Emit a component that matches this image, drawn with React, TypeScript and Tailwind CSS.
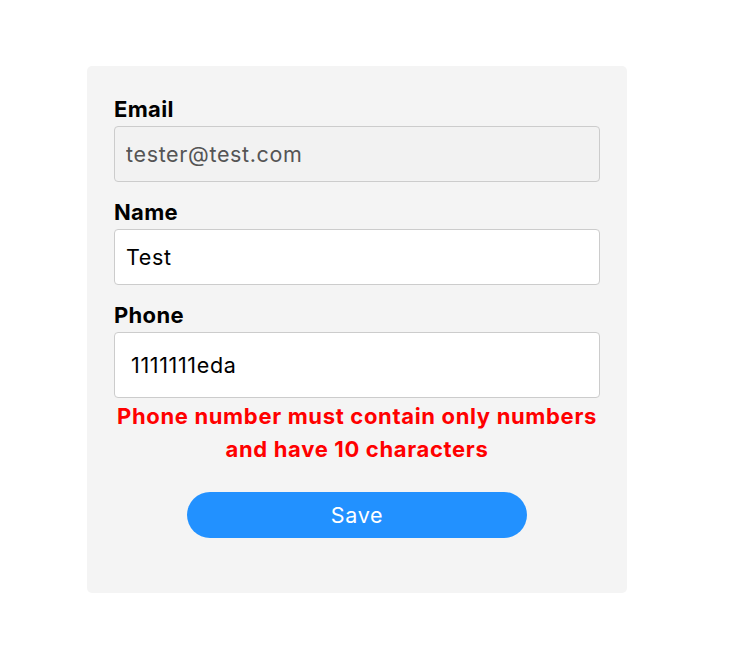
import React from "react";

export default function App() {
  const font = { fontFamily: "Inter, 'Noto Sans', sans-serif" };
  return (
    <div className="min-h-screen bg-white tracking-[0.02em]" style={font}>
      <div className="pt-[66px] pl-[87px]">
        <div className="w-[540px] bg-[#f4f4f4] rounded-[5px] px-[27px] pt-[29px] pb-[55px]">
          <label className="block text-[22px] leading-[28px] font-bold text-black mb-[3px]">Email</label>
          <input
            disabled
            value="tester@test.com"
            readOnly
            className="block w-full h-[56px] px-[11px] rounded-[4px] border border-[#cccccc] bg-[#f2f2f2] text-[21.5px] text-[#555555] tracking-[0.03em]"
          />
          <label className="block mt-[16px] text-[22px] leading-[28px] font-bold text-black mb-[3px]">Name</label>
          <input
            value="Test"
            readOnly
            className="block w-full h-[56px] px-[11px] rounded-[4px] border border-[#cccccc] bg-white text-[21.5px] text-black tracking-[0.03em]"
          />
          <label className="block mt-[16px] text-[22px] leading-[28px] font-bold text-black mb-[3px]">Phone</label>
          <input
            value="1111111eda"
            readOnly
            className="block w-full h-[66px] px-[16px] rounded-[4px] border border-[#cccccc] bg-white text-[21.5px] text-black tracking-[0.03em]"
          />
          <p className="pt-[2px] text-center text-[22px] leading-[33px] font-bold text-[#ff0000] tracking-[0.03em]">
            Phone number must contain only numbers
            <br />
            and have 10 characters
          </p>
          <div className="flex justify-center mt-[26px]">
            <button className="w-[340px] h-[46px] rounded-full bg-[#2291ff] text-white text-[21.5px] tracking-[0.03em]">Save</button>
          </div>
        </div>
      </div>
    </div>
  );
}
